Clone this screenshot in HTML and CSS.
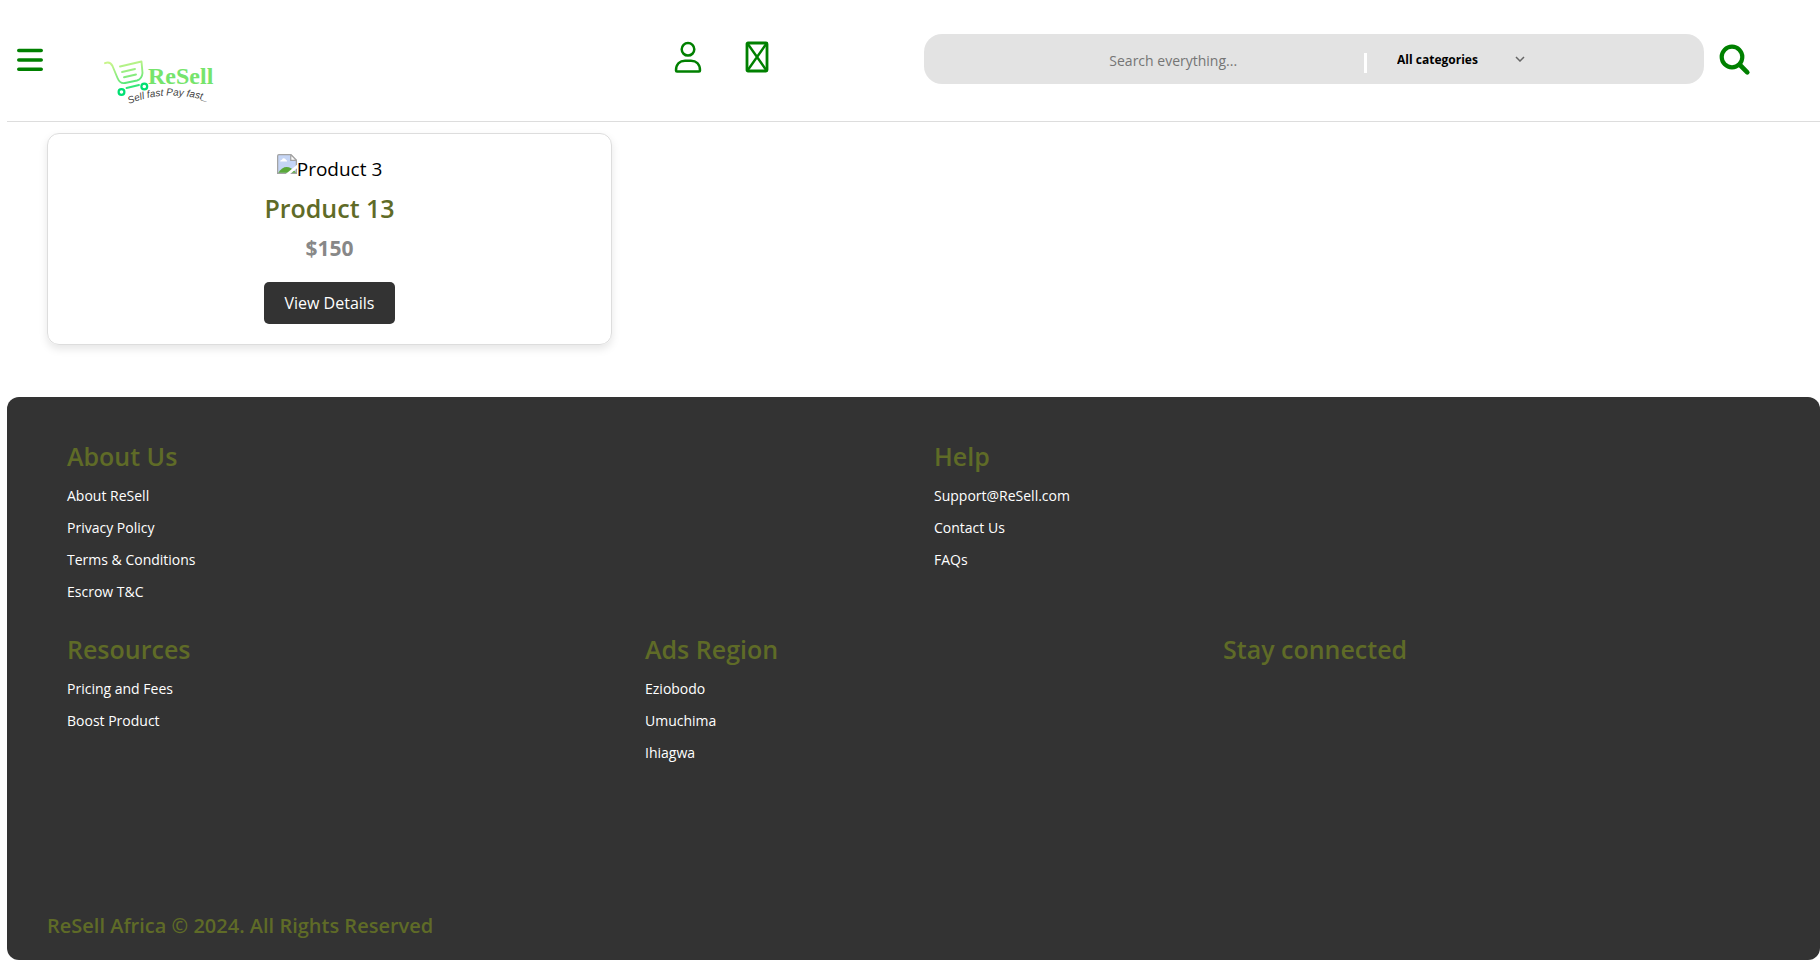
FILE: index.html
```html
<!DOCTYPE html>
<html lang="en">
<head>
<meta charset="utf-8">
<meta name="viewport" content="width=device-width, initial-scale=1">
<title>ReSell</title>
<link rel="stylesheet" href="styles.css">
</head>
<body>
<header class="header">
  <div class="brand">
    <button class="icon-button menu" type="button" aria-label="Menu">
      <svg width="26" height="24" viewBox="0 0 26 24" fill="none" stroke="currentColor" stroke-width="3.6" stroke-linecap="round"><path d="M1.8 2.5h22.4M1.8 12h22.4M1.8 21.3h22.4"/></svg>
    </button>
    <a class="logo" href="#" aria-label="ReSell home">
      <svg width="110" height="48" viewBox="0 0 110 48" fill="none">
        <defs>
          <linearGradient id="cart" gradientUnits="userSpaceOnUse" x1="20" y1="0" x2="26" y2="33">
            <stop offset="0" stop-color="#c9f58b"/><stop offset=".55" stop-color="#7eea7c"/><stop offset="1" stop-color="#00e676"/>
          </linearGradient>
          <path id="slogan" d="M25 44Q66 27 112 44"/>
        </defs>
        <g stroke="url(#cart)" stroke-width="1.9" stroke-linecap="round" stroke-linejoin="round">
          <path d="M1 3.2Q6 1 8.500 6L13.500 18Q16 24 21 23L33 20.500Q38 19 38.500 13L37.500 1.500L16 6.500"/>
          <path d="M18 12L31 9M20 17.200L32 14.500M22.500 28L35 25"/>
        </g>
        <g stroke="#00df72" stroke-width="2.2"><circle cx="17.500" cy="32" r="2.900"/><circle cx="40.300" cy="26.500" r="2.900"/></g>
        <text class="logo-name" x="44" y="24">ReSell</text>
        <text class="logo-slogan"><textPath href="#slogan">Sell fast Pay fast_</textPath></text>
      </svg>
    </a>
  </div>
  <nav class="actions" aria-label="Account">
    <button class="icon-button" type="button" aria-label="Profile">
      <svg width="28" height="32" viewBox="0 0 28 32" fill="none" stroke="currentColor" stroke-width="2.5" stroke-linejoin="round"><circle cx="14" cy="8.300" r="6.300"/><path d="M2 29.500C2 23 6 19.700 11 19.700h6c5 0 9 3.300 9 9.800q0 1-1 1H3q-1 0-1-1z"/></svg>
    </button>
    <button class="icon-button" type="button" aria-label="Messages">
      <svg width="24" height="32" viewBox="0 0 24 32" fill="none" stroke="currentColor" stroke-width="2.800"><rect x="2" y="2" width="20" height="28" rx="1"/><path d="M2.500 2.500l19 27M21.500 2.500l-19 27" stroke-width="2.400"/></svg>
    </button>
  </nav>
  <form class="search" role="search">
    <input class="search-input" type="search" placeholder="Search everything..." aria-label="Search">
    <span class="divider"></span>
    <span class="category">
      <select class="category-select" aria-label="Category"><option>All categories</option></select>
      <svg class="chevron" width="10" height="6" viewBox="0 0 10 6" fill="none" stroke="#666" stroke-width="1.500"><path d="M1 1l4 4 4-4"/></svg>
    </span>
  </form>
  <button class="icon-button find" type="button" aria-label="Find">
    <svg width="32" height="32" viewBox="0 0 32 32" fill="none" stroke="currentColor"><circle cx="13" cy="13" r="10.300" stroke-width="4.200"/><path d="M20.500 20.500l7.800 7.800" stroke-width="4.600" stroke-linecap="round"/></svg>
  </button>
</header>

<main class="products">
  <article class="card">
    <div class="picture">
      <svg width="20" height="20" viewBox="0 0 16 16"><path d="M.5 3V1.500q0-1 1-1H11L15.500 5v10.500H.5z" fill="#c5d5f5" stroke="#a3a3a3"/><path d="M11 .5V5h4.500z" fill="#fff" stroke="#a3a3a3"/><path d="M1 15q6-9 14-.500v.5z" fill="#5aa83a"/><path d="M2.500 6q0-1.500 1.500-1.500Q4.500 3 6 3.500q1 0 1.200 1.200Q8.500 5 8 6z" fill="#fff"/><path d="M7 16l9-7.500v2.800L10.500 16z" fill="#fff"/></svg>
      <span>Product 3</span>
    </div>
    <h2 class="product-name">Product 13</h2>
    <p class="price">$150</p>
    <button class="details" type="button">View Details</button>
  </article>
</main>

<footer class="footer">
  <div class="row">
    <section class="column">
      <h2 class="heading">About Us</h2>
      <ul class="links"><li><a href="#">About ReSell</a></li><li><a href="#">Privacy Policy</a></li><li><a href="#">Terms &amp; Conditions</a></li><li><a href="#">Escrow T&amp;C</a></li></ul>
    </section>
    <section class="column">
      <h2 class="heading">Help</h2>
      <ul class="links"><li><a href="#">Support@ReSell.com</a></li><li><a href="#">Contact Us</a></li><li><a href="#">FAQs</a></li></ul>
    </section>
  </div>
  <div class="row">
    <section class="column">
      <h2 class="heading">Resources</h2>
      <ul class="links"><li><a href="#">Pricing and Fees</a></li><li><a href="#">Boost Product</a></li></ul>
    </section>
    <section class="column">
      <h2 class="heading">Ads Region</h2>
      <ul class="links"><li><a href="#">Eziobodo</a></li><li><a href="#">Umuchima</a></li><li><a href="#">Ihiagwa</a></li></ul>
    </section>
    <section class="column">
      <h2 class="heading">Stay connected</h2>
    </section>
  </div>
  <p class="copyright">ReSell Africa © 2024. All Rights Reserved</p>
</footer>
</body>
</html>
```
FILE: styles.css
```css
* { box-sizing: border-box; }

body {
  margin: 0 0 0 7px;
  background: #fff;
  color: #000;
  font-family: "Segoe UI", "Open Sans", sans-serif;
}

h2, p, ul { margin: 0; padding: 0; }

.header {
  display: grid;
  grid-template-columns: 36.8% 13.8% 43% 1fr;
  align-items: start;
  padding: 34px 0 13px;
  border-bottom: 1px solid #ddd;
}

.brand { display: flex; align-items: flex-start; gap: 61px; padding-left: 10px; }
.logo { display: block; margin-top: 26px; }
.logo svg { display: block; }
.logo-name { font: bold 24px "Liberation Serif", serif; fill: #76e46c; }
.logo-slogan { font: italic 10px "Liberation Sans", sans-serif; fill: #444; }

.icon-button {
  display: flex;
  align-items: center;
  height: 50px;
  padding: 0;
  border: 0;
  background: none;
  color: green;
  cursor: pointer;
}

.menu, .find { height: 52px; }
.actions { display: flex; gap: 43px; }
.actions .icon-button { height: 46px; }
.find { margin-left: 15px; }

.search {
  display: flex;
  align-items: center;
  height: 50px;
  border-radius: 18px;
  background: #e3e3e3;
}

.search-input {
  flex: 0 0 56.4%;
  min-width: 0;
  height: 50px;
  padding: 2px 0 0 72px;
  border: 0;
  outline: 0;
  background: none;
  font: 14px "Segoe UI", "Open Sans", sans-serif;
  text-align: center;
}
.search-input::placeholder { color: #757575; }

.divider { width: 3px; height: 20px; margin-top: 8px; background: #fff; }

.category { flex: 1; display: flex; align-items: center; padding-left: 30px; }
.category-select {
  width: 118px;
  appearance: none;
  padding: 0;
  border: 0;
  background: none;
  color: #000;
  font: bold 12px "Segoe UI", "Open Sans", sans-serif;
}

.products {
  display: grid;
  grid-template-columns: repeat(3, 1fr);
  gap: 20px;
  padding: 11px 38px 52px 40px;
}

.card {
  display: flex;
  flex-direction: column;
  align-items: center;
  padding: 20px;
  border: 1px solid #ddd;
  border-radius: 12px;
  box-shadow: 0 4px 8px rgba(0, 0, 0, 0.1);
}

.picture { display: flex; height: 30px; font-size: 19px; line-height: 30px; }

.product-name, .price, .heading, .copyright {
  font-family: "Comic Sans MS", "Open Sans", sans-serif;
  font-weight: 600;
}
.product-name { margin-top: 6px; color: #5f6b27; font-size: 25px; line-height: 36px; }
.price { margin-top: 8px; color: #888; font-size: 21px; font-weight: 700; line-height: 28px; }

.details {
  height: 42px;
  margin-top: 20px;
  padding: 0 20px;
  border: 0;
  border-radius: 5px;
  background: #333;
  color: #fff;
  font: 16px "Segoe UI", "Open Sans", sans-serif;
}

.footer {
  padding: 40px 39px 20px 40px;
  border-radius: 12px;
  background: #333;
}

.row { display: flex; min-height: 193px; }
.column { flex: 1; padding: 0 20px; }
.heading { color: #5f6b27; font-size: 25px; line-height: 38px; }
.links { list-style: none; padding-top: 4px; }
.links li { height: 32px; line-height: 32px; }
.links a { color: #fff; font-size: 14px; text-decoration: none; }

.copyright { margin-top: 89px; color: #5f6b27; font-size: 20px; line-height: 28px; }
```
